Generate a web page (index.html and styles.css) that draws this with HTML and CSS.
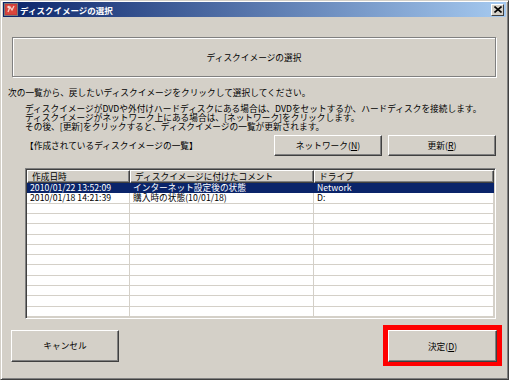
FILE: index.html
```html
<!DOCTYPE html>
<html lang="ja">
  <head>
    <meta charset="UTF-8" />
    <title>ディスクイメージの選択</title>
    <link rel="stylesheet" href="styles.css">
  </head>
  <body>
    <div class="ventana">
      <div class="barra-titulo">
        <span class="icono-app">
          <svg width="14" height="13" viewBox="0 0 14 13">
            <rect x="0.5" y="0.5" width="13" height="12" fill="#c83c3c" stroke="#7a7a7a" />
            <rect x="2" y="2" width="10" height="9" fill="#d9463c" />
            <path d="M4 9 L6 4 L8 7 L10 3" stroke="#f5d0c8" stroke-width="1.3" fill="none" />
            <circle cx="4.5" cy="4" r="1.2" fill="#f0e0e0" />
          </svg>
        </span>
        <span class="titulo">ディスクイメージの選択</span>
        <span class="cerrar">
          <svg width="8" height="7" viewBox="0 0 8 7">
            <path d="M0.5 0.5 L7.5 6.5 M7.5 0.5 L0.5 6.5" stroke="#000" stroke-width="1.6" />
          </svg>
        </span>
      </div>

      <div class="contenido">
        <div class="cabecera">ディスクイメージの選択</div>

        <p class="indicacion">次の一覧から、戻したいディスクイメージをクリックして選択してください。</p>

        <div class="notas">
          <p>ディスクイメージがDVDや外付けハードディスクにある場合は、DVDをセットするか、ハードディスクを接続します。</p>
          <p>ディスクイメージがネットワーク上にある場合は、[ネットワーク]をクリックします。</p>
          <p>その後、[更新]をクリックすると、ディスクイメージの一覧が更新されます。</p>
        </div>

        <div class="barra-lista">
          <span class="titulo-lista">【作成されているディスクイメージの一覧】</span>
          <div class="botones-lista">
            <button class="boton">ネットワーク(<u>N</u>)</button>
            <button class="boton">更新(<u>R</u>)</button>
          </div>
        </div>

        <div class="lista">
          <div class="celda encabezado">作成日時</div>
          <div class="celda encabezado">ディスクイメージに付けたコメント</div>
          <div class="celda encabezado">ドライブ</div>

          <div class="fila seleccionada">
            <div class="celda">2010/01/22 13:52:09</div>
            <div class="celda">インターネット設定後の状態</div>
            <div class="celda">Network</div>
          </div>
          <div class="fila">
            <div class="celda">2010/01/18 14:21:39</div>
            <div class="celda">購入時の状態(10/01/18)</div>
            <div class="celda">D:</div>
          </div>
          <div class="fila"><div class="celda"></div><div class="celda"></div><div class="celda"></div></div>
          <div class="fila"><div class="celda"></div><div class="celda"></div><div class="celda"></div></div>
          <div class="fila"><div class="celda"></div><div class="celda"></div><div class="celda"></div></div>
          <div class="fila"><div class="celda"></div><div class="celda"></div><div class="celda"></div></div>
          <div class="fila"><div class="celda"></div><div class="celda"></div><div class="celda"></div></div>
          <div class="fila"><div class="celda"></div><div class="celda"></div><div class="celda"></div></div>
          <div class="fila"><div class="celda"></div><div class="celda"></div><div class="celda"></div></div>
          <div class="fila"><div class="celda"></div><div class="celda"></div><div class="celda"></div></div>
          <div class="fila"><div class="celda"></div><div class="celda"></div><div class="celda"></div></div>
          <div class="fila"><div class="celda"></div><div class="celda"></div><div class="celda"></div></div>
          <div class="fila"><div class="celda"></div><div class="celda"></div><div class="celda"></div></div>
        </div>

        <div class="pie">
          <button class="boton grande">キャンセル</button>
          <div class="marco-rojo">
            <button class="boton grande">決定(<u>D</u>)</button>
          </div>
        </div>
      </div>
    </div>
  </body>
</html>
```

FILE: styles.css
```css
body {
  margin: 0;
  font-family: "Noto Sans CJK JP", "Liberation Sans", sans-serif;
  font-size: 8.7px;
  color: #000;
  background: #d4d0c8;
}

.ventana {
  width: 509px;
  height: 380px;
  box-sizing: border-box;
  background: #d4d0c8;
  border: 1px solid;
  border-color: #d4d0c8 #404040 #404040 #d4d0c8;
  box-shadow: inset 1px 1px #fff, inset -1px -1px #808080;
  padding: 1px 2px 2px 2px;
  display: flex;
  flex-direction: column;
}

.barra-titulo {
  height: 15px;
  display: flex;
  align-items: center;
  background: linear-gradient(to right, #0a246a, #a6caf0);
  color: #fff;
  padding: 0 2px 0 1px;
}

.icono-app {
  width: 14px;
  height: 13px;
  display: flex;
}

.titulo {
  margin-left: 2px;
  font-weight: bold;
  font-size: 8.5px;
  flex: 1;
}

.cerrar {
  width: 11px;
  height: 10px;
  background: #d4d0c8;
  border: 1px solid;
  border-color: #fff #404040 #404040 #fff;
  display: flex;
  align-items: center;
  justify-content: center;
}

.contenido {
  flex: 1;
  display: flex;
  flex-direction: column;
}

.cabecera {
  margin: 20px 10px 0 9px;
  height: 40px;
  box-sizing: border-box;
  border: 1px solid #808080;
  box-shadow: inset 1px 1px #fff, 1px 1px #fff;
  display: flex;
  align-items: center;
  justify-content: center;
}

.indicacion {
  margin: 10px 0 0 5px;
  line-height: 12px;
}

.notas {
  margin: 5px 0 0 22px;
}

.notas p {
  margin: 0;
  line-height: 9px;
}

.barra-lista {
  margin: 4px 10px 0 22px;
  display: flex;
  align-items: center;
  justify-content: space-between;
}

.botones-lista {
  display: flex;
  gap: 6px;
}

.boton {
  font-family: inherit;
  font-size: 8.7px;
  width: 108px;
  height: 21px;
  padding: 0;
  background: #d4d0c8;
  color: #000;
  border: 1px solid;
  border-color: #fff #404040 #404040 #fff;
  box-shadow: inset -1px -1px #808080;
  cursor: pointer;
}

.boton.grande {
  height: 32px;
}

.lista {
  margin: 12px 10px 0 22px;
  height: 151px;
  box-sizing: border-box;
  background: #fff;
  border: 1px solid;
  border-color: #808080 #fff #fff #808080;
  box-shadow: inset 1px 1px #404040, inset -1px -1px #d4d0c8;
  padding: 1px;
  display: grid;
  grid-template-columns: 103px 184px 1fr;
  grid-template-rows: 13px repeat(13, 1fr);
}

.fila {
  display: contents;
}

.celda {
  border-right: 1px solid #d4d0c8;
  border-bottom: 1px solid #d4d0c8;
  padding-left: 3px;
  white-space: nowrap;
  display: flex;
  align-items: center;
  line-height: 9px;
  min-height: 0;
}

.celda.encabezado {
  background: #d4d0c8;
  border: 1px solid;
  border-color: #fff #404040 #404040 #fff;
  box-shadow: inset -1px -1px #808080;
  padding-left: 4px;
}

.seleccionada .celda {
  background: #0a246a;
  color: #fff;
  border-right-color: #0a246a;
  border-bottom-color: #0a246a;
}

.pie {
  margin: 6px 4px 0 8px;
  display: flex;
  justify-content: space-between;
  align-items: center;
}

.marco-rojo {
  border: 5px solid #f00;
  border-bottom-width: 4px;
  display: flex;
}

.marco-rojo .boton {
  width: 109px;
}
```
